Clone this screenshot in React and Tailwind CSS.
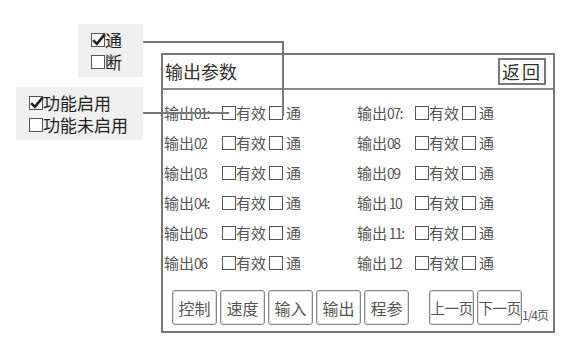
import React from "react";

const cjk = { fontFamily: '"Noto Sans CJK SC", "Noto Sans", sans-serif' };

const Box = ({ checked = false, className = "" }) => (
  <span
    className={`relative inline-block w-[14px] h-[14px] border-[1.5px] border-[#555] bg-white shrink-0 ${className}`}
  >
    {checked && (
      <svg
        viewBox="0 0 14 14"
        className="absolute -left-[1px] -top-[2px] w-[15px] h-[15px]"
      >
        <path d="M2 7.5 L5.5 11 L13 2" fill="none" stroke="#222" strokeWidth="2.4" />
      </svg>
    )}
  </span>
);

const outputs = [
  ["01:", "07:"],
  ["02", "08"],
  ["03", "09"],
  ["04:", " 10"],
  ["05", " 11:"],
  ["06", " 12"],
];

const Row = ({ num }) => (
  <div className="flex items-center h-[30px] text-[15px] text-[#555]">
    <span className="w-[56px] whitespace-pre">
      输出<span className="tracking-[-1.5px] text-[14px]">{num}</span>
    </span>
    <Box className="ml-[2px]" />
    <span>有效</span>
    <Box className="ml-[3px]" />
    <span className="ml-[3px]">通</span>
  </div>
);

const Btn = ({ children, small }) => (
  <div
    className={`w-[45px] h-[35px] flex items-center justify-center border border-[#888] rounded-[3px] bg-white text-[#555] shadow-[inset_0_0_0_1px_#ddd] ${
      small ? "text-[14.5px] tracking-[-0.5px]" : "text-[16px]"
    }`}
  >
    {children}
  </div>
);

export default function App() {
  return (
    <div className="relative w-[579px] h-[342px] bg-white flex overflow-hidden" style={cjk}>
      <div className="w-[143px] flex flex-col items-end shrink-0">
        <div className="mt-[24px] w-[65px] h-[53px] bg-[#f0f0f0] flex flex-col justify-center pl-[13px] text-[17px] leading-[22px] text-[#222]">
          <div className="flex items-center">
            <Box checked />
            <span>通</span>
          </div>
          <div className="flex items-center">
            <Box />
            <span>断</span>
          </div>
        </div>
        <div className="mt-[10px] w-[127px] h-[53px] bg-[#f0f0f0] flex flex-col justify-center pl-[13px] text-[17px] leading-[22px] text-[#222]">
          <div className="flex items-center">
            <Box checked />
            <span>功能启用</span>
          </div>
          <div className="flex items-center">
            <Box />
            <span>功能未启用</span>
          </div>
        </div>
      </div>

      <div className="ml-[18px] mt-[53px] w-[394px] h-[280px] border-2 border-[#777] flex flex-col">
        <div className="h-[35px] border-b-2 border-[#888] flex items-center justify-between pl-[2px] pr-[7px]">
          <span className="text-[18px] text-[#333]">输出参数</span>
          <div className="h-[27px] px-[2px] border-2 border-[#777] flex items-center text-[18px] text-[#333] tracking-[2px]">
            返回
          </div>
        </div>
        <div className="grid grid-cols-[193px_1fr] pl-[1px] pt-[8px]">
          {outputs.map(([a, b]) => (
            <React.Fragment key={a}>
              <Row num={a} />
              <Row num={b} />
            </React.Fragment>
          ))}
        </div>
        <div className="flex items-end mt-[12px] pl-[9px]">
          <div className="flex gap-[3px]">
            <Btn>控制</Btn>
            <Btn>速度</Btn>
            <Btn>输入</Btn>
            <Btn>输出</Btn>
            <Btn>程参</Btn>
          </div>
          <div className="flex gap-[3px] ml-[20px]">
            <Btn small>上一页</Btn>
            <Btn small>下一页</Btn>
          </div>
          <span className="text-[12px] text-[#555] mb-[1px] tracking-[-1px]">1/4页</span>
        </div>
      </div>

      <svg className="absolute inset-0 pointer-events-none" width="579" height="342">
        <path d="M143 42 H283 V116" fill="none" stroke="#777" strokeWidth="2" />
        <path d="M143 113 H229" fill="none" stroke="#777" strokeWidth="2" />
      </svg>
    </div>
  );
}
